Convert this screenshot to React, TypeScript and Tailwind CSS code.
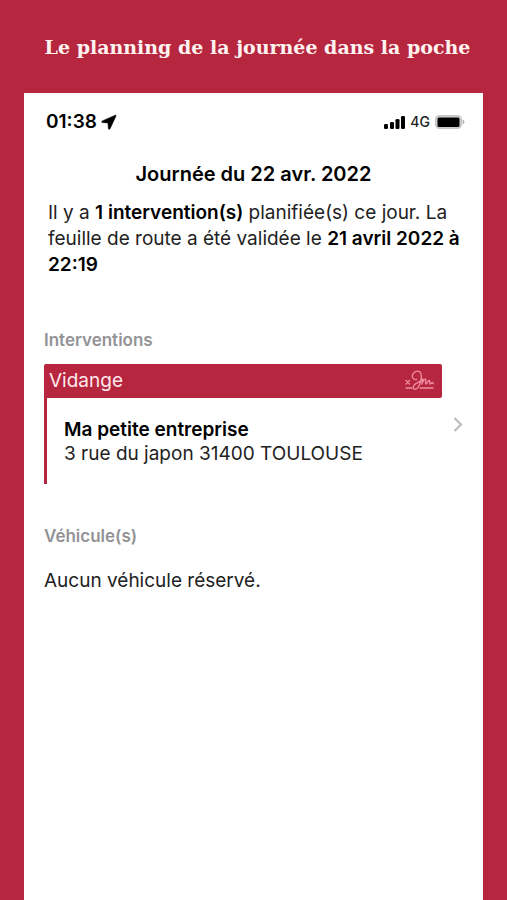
import React from "react";

function StatusBar() {
  return (
    <div className="flex h-[26px] items-center justify-between pl-0.5 pr-px">
      <div className="flex items-center gap-1">
        <span className="text-[19px] font-semibold leading-6">01:38</span>
        <svg className="h-4 w-4" viewBox="0 0 16 16" aria-hidden="true">
          <path
            d="M14.2 1.2 1.2 6.9c-.8.4-.6 1.7.3 1.7l4.9.3c.4 0 .6.2.6.6l.3 4.9c.1 1 1.4 1.2 1.800.3L15 2c.3-.6-.2-1.100-.8-.8Z"
            fill="black"
            stroke="black"
            strokeWidth="0.5"
          />
        </svg>
      </div>
      <div className="flex items-center">
        <svg className="h-4 w-[22px]" viewBox="0 0 22 16" aria-hidden="true">
          <rect x="0" y="10" width="4" height="5" rx="1.3" />
          <rect x="6" y="8" width="4" height="7" rx="1.3" />
          <rect x="11.5" y="5" width="4" height="10" rx="1.3" />
          <rect x="17" y="2" width="4" height="13" rx="1.3" />
        </svg>
        <span className="ml-1 text-[14px] font-medium leading-6 text-[#222222]">4G</span>
        <svg className="ml-1 h-4 w-8" viewBox="0 0 32 16" aria-hidden="true">
          <rect x="1" y="1" width="27" height="14" rx="4.5" fill="#c6c6c6" />
          <rect x="2.5" y="2.5" width="24" height="11" rx="3" fill="#d2d2d2" />
          <rect x="3.5" y="3.5" width="22" height="9.5" rx="1.5" fill="black" />
          <path d="M28.5 5.5c2.6.8 2.6 4.2 0 5Z" fill="#b5b5b5" />
        </svg>
      </div>
    </div>
  );
}

function Signature() {
  return (
    <svg
      className="h-6 w-8"
      viewBox="0 0 32 24"
      fill="none"
      stroke="#f08ea2"
      strokeWidth="1.3"
      strokeLinecap="round"
      strokeLinejoin="round"
      aria-hidden="true"
    >
      <path d="m2 11.500 3.500 3.500m0-3.500L2 15" />
      <path d="M2 19h6m8 0h13" />
      <path d="M12.500 10.500C8.500 11 6.800 7 9.500 4.200c2.600-2.900 6.500-2.600 7.500.6 1.200 4-.8 10.500-3 13.700-1.600 2.300-4.500 2.300-4.800.1-.4-3 3.600-4.600 6.300-6 1.500-.8 2.700-1.800 3.500-2.600l-1.300 5.200c1-2.400 2.500-4.900 3.700-5 1.300 0-.5 4.300.3 4.800 1 .4 2.300-3.600 3.700-3.500 1.200.2-.5 3.200.6 3.500.9.2 1.400-1.500 2.300-1.500.7.1.4 1.300 1.400 1.300" />
    </svg>
  );
}

function Intervention() {
  return (
    <a href="#intervention" className="mt-3 flex items-center">
      <div className="h-[120px] min-w-0 flex-1 rounded-tl-[2px] border-l-[3px] border-[#b7263f]">
        <div className="flex h-[34px] items-center justify-between rounded-r-[2px] bg-[#b7263f] pl-[2px] pr-1.5">
          <span className="text-[19px] leading-6 text-[#ffe9ec]">Vidange</span>
          <Signature />
        </div>
        <div className="pl-[17px] pt-5">
          <p className="text-[19px] font-semibold leading-6">Ma petite entreprise</p>
          <p className="text-[19px] leading-6 text-[#222222]">3 rue du japon 31400 TOULOUSE</p>
        </div>
      </div>
      <svg
        className="ml-2.5 mr-[3px] h-4 w-3"
        viewBox="0 0 12 16"
        fill="none"
        stroke="#bdbdbf"
        strokeWidth="2.2"
        aria-hidden="true"
      >
        <path d="m2.5 2 6.5 6.5L2.5 15" />
      </svg>
    </a>
  );
}

export default function App() {
  return (
    <div className="flex min-h-screen flex-col bg-[#b7263f] px-6 font-['Inter','Liberation_Sans',sans-serif] text-black">
      <h1 className="whitespace-nowrap pb-8 pl-2 pt-[33px] text-center font-['DejaVu_Serif',serif] text-[19px] font-bold leading-7 text-[#fff3f1]">
        Le planning de la journée dans la poche
      </h1>
      <main className="flex-1 bg-white pl-5 pr-4 pt-4">
        <StatusBar />
        <h2 className="mt-[27px] pr-1 text-center text-[20px] font-semibold leading-6">Journée du 22 avr. 2022</h2>
        <p className="mt-3.5 pl-1 text-[19px] leading-[26px] text-[#222222]">
          Il y a <strong className="font-semibold text-black">1 intervention(s)</strong> planifiée(s) ce jour. La
          feuille de route a été validée le{" "}
          <strong className="font-semibold text-black">21 avril 2022 à 22:19</strong>
        </p>
        <section>
          <h3 className="mt-[50px] text-[17px] font-semibold leading-6 text-[#939396]">Interventions</h3>
          <Intervention />
        </section>
        <section>
          <h3 className="mt-10 text-[17px] font-semibold leading-6 text-[#939396]">Véhicule(s)</h3>
          <p className="mt-[21px] text-[19px] leading-6 text-[#222222]">Aucun véhicule réservé.</p>
        </section>
      </main>
    </div>
  );
}
